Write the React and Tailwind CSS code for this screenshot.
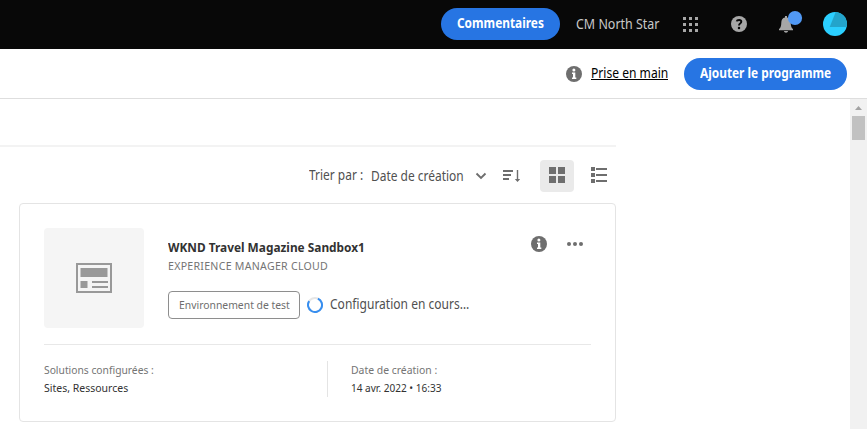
import { useLayoutEffect, useRef, useState } from "react";

// Single line of text condensed to the width of its container.
function Label({ className = "", children }) {
  const outer = useRef(null);
  const inner = useRef(null);
  const [scale, setScale] = useState(1);
  useLayoutEffect(() => {
    setScale(outer.current.clientWidth / inner.current.offsetWidth);
  }, [children]);
  return (
    <span ref={outer} className={`block shrink-0 whitespace-nowrap ${className}`}>
      <span ref={inner} className="inline-block origin-left" style={{ transform: `scaleX(${scale})` }}>
        {children}
      </span>
    </span>
  );
}

function InfoIcon({ className = "" }) {
  return (
    <svg viewBox="0 0 16 16" className={`size-4 shrink-0 ${className}`}>
      <circle cx="8" cy="8" r="8" fill="#6e6e6e" />
      <circle cx="7.9" cy="4" r="1.5" fill="#fff" />
      <path d="M6 6.5h3.3v5h1V13H6v-1.5h1V8H6z" fill="#fff" />
    </svg>
  );
}

function TopBar() {
  return (
    <header className="flex h-[49px] items-start bg-[#080808] pr-5 pt-2">
      <button className="ml-auto flex h-8 w-[119px] items-center rounded-full bg-[#2775e3] pb-0.5 pl-4 text-white">
        <Label className="w-[87px] text-[13.5px] leading-5 font-bold">Commentaires</Label>
      </button>
      <div className="flex h-8 items-center pl-4">
        <Label className="w-[83px] text-[13.5px] leading-5 text-[#c9c9c9]">CM North Star</Label>
        <svg viewBox="0 0 15 15" className="ml-6 size-[15px]" fill="#a7a7a7" shapeRendering="crispEdges">
          {[0, 6, 12].map((y) => [0, 6, 12].map((x) => <rect key={`${x}-${y}`} x={x} y={y} width="3" height="3" />))}
        </svg>
        <svg viewBox="0 0 16 16" className="ml-[33px] size-4">
          <circle cx="8" cy="8" r="8" fill="#a7a7a7" />
          <path d="M5.7 5.3C6 3.6 10.3 3.2 10.3 5.7 10.3 7.4 8 7.4 8 9.5" fill="none" stroke="#080808" strokeWidth="1.9" />
          <circle cx="8" cy="12" r="1.25" fill="#080808" />
        </svg>
        <svg viewBox="0 0 24 24" className="ml-8 size-6 overflow-visible" fill="#a7a7a7">
          <path d="M6 4h2v1.4c2.5.4 3.7 2.4 3.7 5 0 4 1 5.5 2.3 6.600v1.200H0V17c1.300-1.100 2.300-2.600 2.300-6.600 0-2.600 1.200-4.600 3.700-5zM5 19h4c0 2.300-4 2.300-4 0" />
          <circle cx="16" cy="6" r="7.1" fill="#5199f5" />
        </svg>
        <svg viewBox="0 0 24 24" className="ml-5 size-6">
          <circle cx="12" cy="12" r="12" fill="#2bcfff" />
          <path d="M12.7 0A12 12 0 0 1 23.6 15L6.7 15z" fill="#23a4cb" />
        </svg>
      </div>
    </header>
  );
}

function ActionBar() {
  return (
    <div className="flex h-[50px] items-center justify-end border-b border-[#dedede] pr-5 text-[13.5px] leading-5">
      <InfoIcon />
      <a className="mb-px ml-[9px] border-b border-black text-black">
        <Label className="h-3 w-[77px] leading-3">Prise en main</Label>
      </a>
      <button className="ml-4 flex h-8 w-[163px] items-center rounded-full bg-[#2775e3] pb-0.5 pl-4 text-white">
        <Label className="w-[131px] font-bold">Ajouter le programme</Label>
      </button>
    </div>
  );
}

function SortBar() {
  return (
    <div className="mt-[13px] flex h-8 items-center pl-[309px] text-[13.5px] leading-5 text-[#505050]">
      <Label className="mb-0.5 w-[54px]">Trier par :</Label>
      <Label className="ml-2 w-[93px]">Date de création</Label>
      <svg viewBox="0 0 10 6" className="ml-3 h-1.5 w-2.5 overflow-visible" fill="none" stroke="#6e6e6e" strokeWidth="1.9">
        <path d="M.5.5 5 5 9.5.5" />
      </svg>
      <svg viewBox="0 0 17 12" className="ml-[17px] h-3 w-[17px]" fill="#6e6e6e">
        <path d="M0 0h10v2H0zM0 4h8v2H0zM0 8h6v2H0zM13.8 0h1.400v9h2l-2.700 3-2.700-3h2z" />
      </svg>
      <div className="ml-5 flex h-8 w-[34px] items-center justify-center rounded bg-[#eaeaea]">
        <svg viewBox="0 0 16 16" className="mb-0.5 size-4" fill="#6e6e6e">
          <path d="M0 0h7v7H0zM9 0h7v7H9zM0 9h7v7H0zM9 9h7v7H9z" />
        </svg>
      </div>
      <svg viewBox="0 0 16 16" className="mb-0.5 ml-[17px] size-4" fill="#6e6e6e">
        <path d="M0 0h4v4H0zM0 6h4v4H0zM0 12h4v4H0zM5 1h11v2H5zM5 7h11v2H5zM5 13h11v2H5z" />
      </svg>
    </div>
  );
}

function ProgramCard() {
  return (
    <article className="ml-[19px] mt-[11px] h-[219px] w-[597px] rounded border border-[#e4e4e4] bg-white px-6 pt-6">
      <div className="flex h-[117px] border-b border-[#e8e8e8]">
        <div className="flex size-[100px] shrink-0 items-center justify-center rounded bg-[#f5f5f5]">
          <svg viewBox="0 0 36 30" className="h-[30px] w-9" fill="#999">
            <path d="M0 0h36v30H0zM2 2v26h32V2z" fillRule="evenodd" />
            <path d="M4.5 5h27v9h-27zM4.5 18h7v7h-7zM16 18h16v2H16zM16 23h16v2H16z" />
          </svg>
        </div>
        <div className="ml-6 w-[363px] shrink-0">
          <Label className="mt-[9px] w-[197px] text-[13px] leading-5 font-bold text-[#323232]">WKND Travel Magazine Sandbox1</Label>
          <Label className="mt-px w-[160px] text-[11px] leading-4 tracking-wide text-[#747474]">EXPERIENCE MANAGER CLOUD</Label>
          <div className="mt-[17px] flex items-center">
            <div className="flex h-7 w-[132px] items-center rounded border border-[#8e8e8e] pl-2.5 text-[#6e6e6e]">
              <Label className="w-[111px] text-[11.5px] leading-4">Environnement de test</Label>
            </div>
            <svg viewBox="0 0 16 16" className="ml-[7px] size-4" fill="none" strokeWidth="2">
              <circle cx="8" cy="8" r="7" stroke="#e6e6e6" />
              <path d="M10.9 1.6A7 7 0 1 1 2.2 4.1" stroke="#378ef0" />
            </svg>
            <Label className="mb-0.5 ml-[7px] w-[139px] text-[13.5px] leading-5 text-[#505050]">Configuration en cours…</Label>
          </div>
        </div>
        <InfoIcon className="mt-2" />
        <svg viewBox="0 0 16 4" className="ml-5 mt-3.5 h-1 w-4" fill="#6e6e6e">
          <circle cx="2" cy="2" r="2" />
          <circle cx="8" cy="2" r="2" />
          <circle cx="14" cy="2" r="2" />
        </svg>
      </div>
      <div className="mt-4 flex h-9 text-[11.5px] leading-[18px] text-[#323232]">
        <div className="w-[284px] border-r border-[#e4e4e4]">
          <Label className="w-[110px] text-[#747474]">Solutions configurées :</Label>
          <Label className="w-[84px]">Sites, Ressources</Label>
        </div>
        <div className="pl-[23px]">
          <Label className="w-[86px] text-[#747474]">Date de création :</Label>
          <Label className="w-[90px]">14 avr. 2022 • 16:33</Label>
        </div>
      </div>
    </article>
  );
}

function Scrollbar() {
  return (
    <div className="w-[17px] bg-[#f1f1f1] px-0.5 pt-[7px]">
      <svg viewBox="0 0 7 4" className="mx-auto h-1 w-[7px]" fill="#a3a3a3">
        <path d="M3.5 0 7 4H0z" />
      </svg>
      <div className="mt-1.5 h-6 bg-[#c1c1c1]" />
    </div>
  );
}

export default function App() {
  return (
    <div className="h-[429px] w-[867px] overflow-hidden bg-white font-['Noto_Sans','Open_Sans',sans-serif]">
      <TopBar />
      <ActionBar />
      <div className="flex h-[330px]">
        <main className="w-[850px]">
          <div className="mt-[46px] h-0.5 w-[616px] bg-[#f3f3f3]" />
          <SortBar />
          <ProgramCard />
        </main>
        <Scrollbar />
      </div>
    </div>
  );
}
